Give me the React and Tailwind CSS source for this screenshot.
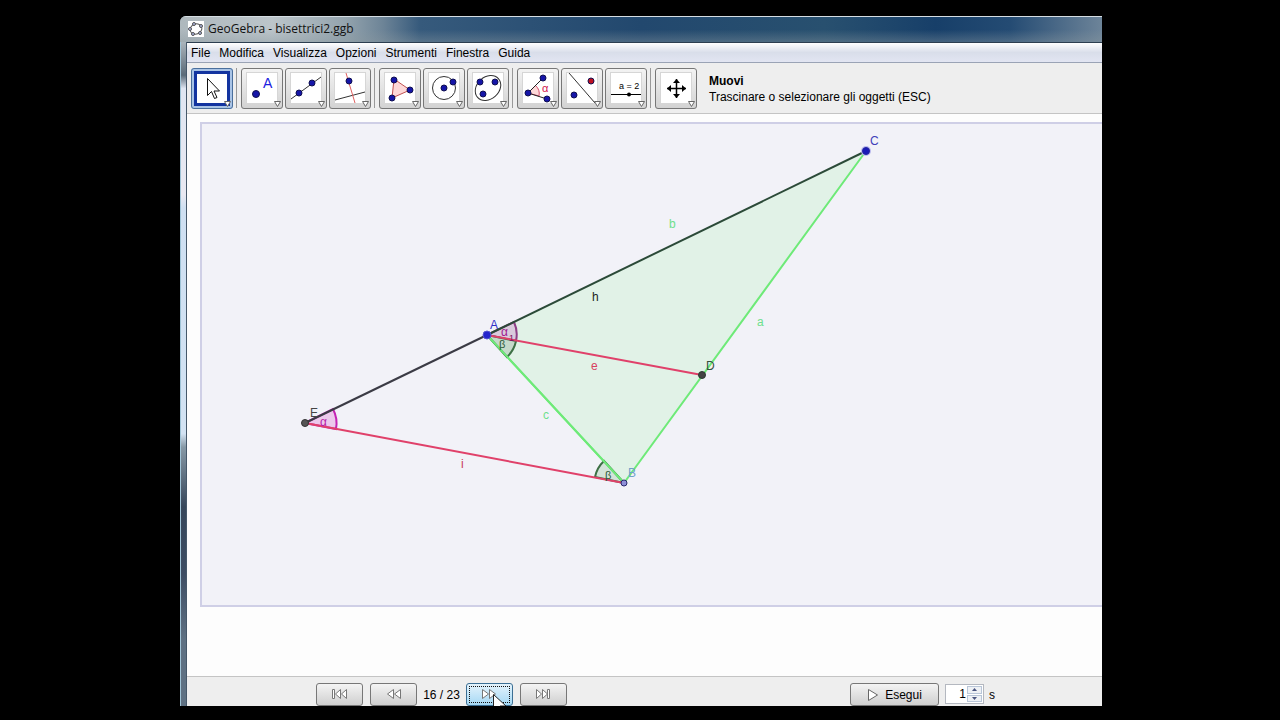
import { useState } from 'react';
import clsx from 'clsx';

const MENUS = ['File', 'Modifica', 'Visualizza', 'Opzioni', 'Strumenti', 'Finestra', 'Guida'];

const Dot = ({ x, y, r = 3, fill = '#1515a8' }) => (
  <circle cx={x} cy={y} r={r} fill={fill} stroke="#101050" strokeWidth="1" />
);

const TOOL_GROUPS = [
  [
    {
      name: 'Muovi',
      icon: (
        <path d="M16.5 10.5v17l4-4 3 7 2.500-1-3-6.500h5.500z" fill="#fff" stroke="#111" />
      ),
    },
  ],
  [
    {
      name: 'Nuovo punto',
      icon: (
        <>
          <Dot x={15} y={26} r={3.5} />
          <text x="22" y="20" fontSize="14" fill="#2020e0">A</text>
        </>
      ),
    },
    {
      name: 'Retta per due punti',
      icon: (
        <>
          <path d="M6 31L36 9" stroke="#333" />
          <Dot x={14} y={25} />
          <Dot x={27} y={15} />
        </>
      ),
    },
    {
      name: 'Retta perpendicolare',
      icon: (
        <>
          <path d="M6 32L36 24" stroke="#333" />
          <path d="M17 5L26 35" stroke="#e06060" />
          <Dot x={20} y={13} />
        </>
      ),
    },
  ],
  [
    {
      name: 'Poligono',
      icon: (
        <>
          <path d="M15 11L31 22L13 30Z" fill="#fdd8d8" stroke="#c05050" />
          <Dot x={15} y={12} />
          <Dot x={31} y={22} />
          <Dot x={13} y={30} />
        </>
      ),
    },
    {
      name: 'Circonferenza',
      icon: (
        <>
          <circle cx="21" cy="20" r="11.5" fill="none" stroke="#333" />
          <Dot x={21} y={20} />
          <Dot x={30} y={14} />
        </>
      ),
    },
    {
      name: 'Ellisse',
      icon: (
        <>
          <ellipse cx="21" cy="20" rx="14" ry="11" transform="rotate(-42 21 20)" fill="none" stroke="#333" />
          <Dot x={13} y={14} />
          <Dot x={28} y={14} />
          <Dot x={16} y={26} />
        </>
      ),
    },
  ],
  [
    {
      name: 'Angolo',
      icon: (
        <>
          <path d="M11 25L18.500 17.500A11 11 0 0 1 22 28Z" fill="#fdd8d8" stroke="#d85070" />
          <path d="M26 10L11 25L30 31" fill="none" stroke="#222" />
          <Dot x={26} y={10} />
          <Dot x={11} y={25} />
          <Dot x={30} y={31} />
          <text x="25" y="24" fontSize="11" fill="#d02050">α</text>
        </>
      ),
    },
    {
      name: 'Simmetria assiale',
      icon: (
        <>
          <path d="M8 5L34 35" stroke="#333" />
          <Dot x={30} y={13} fill="#c01020" />
          <Dot x={13} y={27} />
        </>
      ),
    },
    {
      name: 'Slider',
      icon: (
        <>
          <text x="14" y="21" fontSize="9" fill="#000">a = 2</text>
          <path d="M6 26.500H36" stroke="#000" />
          <circle cx="24" cy="26.500" r="2" fill="#000" />
        </>
      ),
    },
  ],
  [
    {
      name: 'Muovi il foglio',
      icon: (
        <>
          <path d="M12 20.500H31M21.500 11V30" stroke="#000" strokeWidth="1.500" />
          <path
            d="M12 20.500l4-3.500v7zM31 20.500l-4-3.500v7zM21.500 11l-3.500 4h7zM21.500 30l-3.500-4h7z"
            fill="#000"
          />
        </>
      ),
    },
  ],
];

function ToolButton({ tool, active, onClick }) {
  return (
    <button
      type="button"
      aria-label={tool.name}
      aria-pressed={active}
      onClick={onClick}
      className={clsx(
        'h-[41px] w-[42px] shrink-0 overflow-hidden rounded-[3px] outline outline-1 -outline-offset-1',
        active
          ? 'bg-[#a9c4e6] outline-[#4a6f9c]'
          : 'bg-linear-to-b from-[#f4f4f4] to-[#d2d2d2] outline-[#777]'
      )}
    >
      <svg viewBox="0 0 42 41" className="block h-[41px] w-[42px]" fill="none">
        {active ? (
          <rect x="4.5" y="4.500" width="33" height="32" fill="#fff" stroke="#1334a0" strokeWidth="3" />
        ) : (
          <rect x="5.500" y="4.500" width="31" height="31" fill="#fff" stroke="#d6d6d6" />
        )}
        {tool.icon}
        <path d="M33.500 33.500h6l-3 5z" fill="#fff" stroke="#666" />
      </svg>
    </button>
  );
}

function Toolbar() {
  const [selected, setSelected] = useState('Muovi');

  return (
    <div className="flex h-[51px] shrink-0 items-center border-b border-[#c4c4c4] bg-[#eeeeee] pl-1">
      {TOOL_GROUPS.map((group, i) => (
        <div key={group[0].name} className="flex items-center">
          {i > 0 && <div className="ml-[3px] mr-1 h-10 w-px bg-[#999]" />}
          <div className="flex gap-0.5">
            {group.map((tool) => (
              <ToolButton
                key={tool.name}
                tool={tool}
                active={tool.name === selected}
                onClick={() => setSelected(tool.name)}
              />
            ))}
          </div>
        </div>
      ))}
      <div className="ml-3 whitespace-nowrap pt-0.5 text-[12px] leading-4">
        <p className="font-bold">Muovi</p>
        <p>Trascinare o selezionare gli oggetti (ESC)</p>
      </div>
    </div>
  );
}

// Triangle ABC with bisector AD and the parallel EB
function Construction() {
  return (
    <svg className="block h-full w-full text-[12px]" fill="none" strokeWidth="2">
      <path d="M285 211L664 27L422 359Z" fill="#e1f2e7" />
      <path d="M664 27L422 359L285 211" stroke="#6eea78" />

      {/* Angles */}
      <path d="M285 211L312 198A30 30 0 0 1 314 217Z" fill="#d9cbdc" stroke="#8e3f86" />
      <path d="M285 211L314 217A30 30 0 0 1 305 233Z" fill="#c5d9ca" stroke="#3d7045" />
      <path d="M103 299L131 285A31 31 0 0 1 134 305Z" fill="#ecc8ec" stroke="#c423b4" />
      <path d="M422 359L393 353A30 30 0 0 1 402 337Z" fill="#d3e3d9" stroke="#3d7045" />

      <path d="M422 359L285 211" stroke="#6eea78" />
      <path d="M103 299L285 211" stroke="#3b3b45" />
      <path d="M285 211L664 27" stroke="#2b4a38" />
      <path d="M285 211L500 251M103 299L422 359" stroke="#e0416a" />

      {/* Points */}
      <circle cx="285" cy="211" r="4" fill="#2424cc" stroke="#5555d0" strokeWidth="1" />
      <circle cx="664" cy="27" r="5" fill="#b9b9ee" />
      <circle cx="664" cy="27" r="3.5" fill="#1a1ab8" stroke="#2525a0" strokeWidth="1" />
      <circle cx="500" cy="251" r="3.5" fill="#444" stroke="#2c3c32" strokeWidth="1" />
      <circle cx="103" cy="299" r="3.5" fill="#555" stroke="#333" strokeWidth="1" />
      <circle cx="422" cy="359" r="3" fill="#8f8fd8" stroke="#28286c" strokeWidth="1" />

      {/* Labels */}
      <text x="668" y="21" fill="#4040b8">C</text>
      <text x="288" y="205" fill="#3030c8">A</text>
      <text x="504" y="246" fill="#35503f">D</text>
      <text x="426" y="353" fill="#6f9fca">B</text>
      <text x="108" y="293" fill="#444">E</text>
      <text x="467" y="104" fill="#6ee08c">b</text>
      <text x="390" y="177" fill="#222">h</text>
      <text x="555" y="202" fill="#6ee08c">a</text>
      <text x="389" y="246" fill="#d8405f">e</text>
      <text x="341" y="295" fill="#6ee08c">c</text>
      <text x="259" y="344" fill="#c83c60">i</text>
      <text x="299" y="212" fill="#a01890">α</text>
      <text x="307" y="217" fontSize="9" fill="#801060">1</text>
      <text x="297" y="224" fontSize="11" fill="#2c5a38">β</text>
      <text x="118" y="302" fill="#b820a8">α</text>
      <text x="403" y="355" fontSize="11" fill="#2c5a38">β</text>
    </svg>
  );
}

const NAV_ICONS = {
  first: 'M1.5 1.500h2v9h-2zM9.500 1.500v9l-5-4.500zM15.500 1.500v9l-5-4.500z',
  prev: 'M8.500 1.500v9l-6-4.500zM15.500 1.500v9l-6-4.500z',
  next: 'M1.500 1.500v9l6-4.500zM8.500 1.500v9l6-4.500z',
  last: 'M1.500 1.500v9l5-4.500zM7.500 1.500v9l5-4.500zM12.500 1.500h2v9h-2z',
};

function NavButton({ icon, label, active, children }) {
  return (
    <button
      type="button"
      aria-label={label}
      className={clsx(
        'relative flex h-[23px] w-[47px] shrink-0 justify-center rounded-[3px] border pt-1',
        active
          ? 'border-[#3c6f94] bg-linear-to-b from-[#e4f3fc] to-[#a4d8f4]'
          : 'border-[#777] bg-linear-to-b from-[#f4f4f4] to-[#cfcfcf]'
      )}
    >
      {active && <span className="absolute inset-0.5 border border-dotted border-[#111]" />}
      <svg viewBox="0 0 17 12" className="h-3 w-[17px]" fill="#fff" stroke="#777">
        <path d={NAV_ICONS[icon]} />
      </svg>
      {children}
    </button>
  );
}

function NavigationBar() {
  return (
    <div className="flex h-[30px] shrink-0 items-start overflow-hidden whitespace-nowrap border-t border-[#c4c4c4] bg-[#eeeeee] pl-[129px] pt-1.5 text-[12px]">
      <div className="flex gap-[7px]">
        <NavButton icon="first" label="Inizio" />
        <NavButton icon="prev" label="Indietro" />
      </div>
      <span className="w-[49px] text-center leading-6">16 / 23</span>
      <div className="flex gap-[7px]">
        <NavButton icon="next" label="Avanti" active>
          <svg viewBox="0 0 14 20" className="absolute left-[26px] top-2.5 h-5 w-3.5">
            <path d="M.5.5v16l4-4 3 7 2.500-1-3-6.500h6z" fill="#fff" stroke="#222" />
          </svg>
        </NavButton>
        <NavButton icon="last" label="Fine" />
      </div>
      <button
        type="button"
        className="ml-[283px] flex h-[23px] w-[89px] shrink-0 items-center justify-center gap-1.5 rounded-[3px] border border-[#777] bg-linear-to-b from-[#f4f4f4] to-[#cfcfcf]"
      >
        <svg viewBox="0 0 12 12" className="h-3 w-3" fill="#fff" stroke="#666">
          <path d="M1.500.5v11l9-5.500z" />
        </svg>
        Esegui
      </button>
      <div className="ml-1.5 mt-px flex h-5 w-[39px] shrink-0 border border-[#b4b8c0] bg-white pr-px">
        <input
          id="delay"
          type="text"
          defaultValue="1"
          className="w-5 bg-white text-right text-[12px] outline-none"
        />
        <div className="ml-px flex flex-1 flex-col gap-px py-px">
          {['M2 4h5l-2.500-3z', 'M2 1h5l-2.500 3z'].map((d, i) => (
            <button
              key={d}
              type="button"
              aria-label={i === 0 ? 'Aumenta' : 'Diminuisci'}
              className="flex flex-1 items-center justify-center border border-[#b9c6d8] bg-[#eef1f5]"
            >
              <svg viewBox="0 0 9 5" className="h-[5px] w-[9px]" fill="#4a5580">
                <path d={d} />
              </svg>
            </button>
          ))}
        </div>
      </div>
      <label htmlFor="delay" className="ml-[5px] leading-6">s</label>
    </div>
  );
}

function TitleBar() {
  return (
    <header className="flex h-[26px] shrink-0 items-center gap-1 border-t border-[#d5dde2] bg-[linear-gradient(180deg,transparent_50%,#8a989f66),linear-gradient(90deg,#aeb8bd,#bcc5ca_10%,#93a3ad_18%,#6d8497_22%,#365a7c_26%,#22486e_50%,#28506f_70%,#173f69_82%,#244b73_90%,#6d8499)] pb-px pl-2">
      <svg viewBox="0 0 16 16" className="h-4 w-4 bg-white" fill="none" stroke="#555">
        <ellipse cx="8" cy="8" rx="6" ry="5" transform="rotate(-20 8 8)" />
        <g fill="#aab4e0">
          <circle cx="6" cy="3" r="1.500" />
          <circle cx="13" cy="5" r="1.500" />
          <circle cx="12" cy="12" r="1.500" />
          <circle cx="5" cy="13" r="1.500" />
          <circle cx="2" cy="8" r="1.500" />
        </g>
      </svg>
      <h1 className="whitespace-nowrap font-['Open_Sans','Noto_Sans',sans-serif] text-[12px] text-[#111]">
        GeoGebra - bisettrici2.ggb
      </h1>
    </header>
  );
}

export default function App() {
  return (
    <div className="flex min-h-screen flex-col bg-black pb-3.5 pl-[180px] pr-[178px] pt-4 font-['Liberation_Sans',Arial,sans-serif] text-black">
      <div className="flex flex-1 flex-col overflow-hidden rounded-tl-md bg-[#8c9ba5]">
        <TitleBar />
        <div className="flex flex-1">
          <div className="w-[7px] shrink-0 border-x border-l-[#9fc3d6] border-r-[#46586a] bg-[linear-gradient(180deg,#aab4bc,#5b6b78_5%,#dfe6f2_7%,#e9e9f2_23%,#cfe0f2_25%,#d3e3f3_59%,#8799a6_61%,#36465a_70%,#3e4d63_80%,#5f7183_90%,#5f7183)]" />
          <main className="flex min-w-0 flex-1 flex-col border-t border-[#2c3e50] bg-white">
            <nav className="flex h-5 shrink-0 items-center gap-[9px] border-b border-[#9aa3b5] bg-linear-to-b from-white via-[#d9deea] to-[#e2e5f2] pl-1 pt-px text-[12px]">
              {MENUS.map((menu) => (
                <button key={menu} type="button">{menu}</button>
              ))}
            </nav>
            <Toolbar />
            <div className="flex min-h-[500px] flex-1 bg-[#fdfdfd] pb-[69px] pl-[13px] pt-2">
              <div className="min-w-0 flex-1 border-y-2 border-l-2 border-[#cfcfe6] bg-[#f2f2f8]">
                <Construction />
              </div>
            </div>
            <NavigationBar />
          </main>
        </div>
      </div>
    </div>
  );
}
